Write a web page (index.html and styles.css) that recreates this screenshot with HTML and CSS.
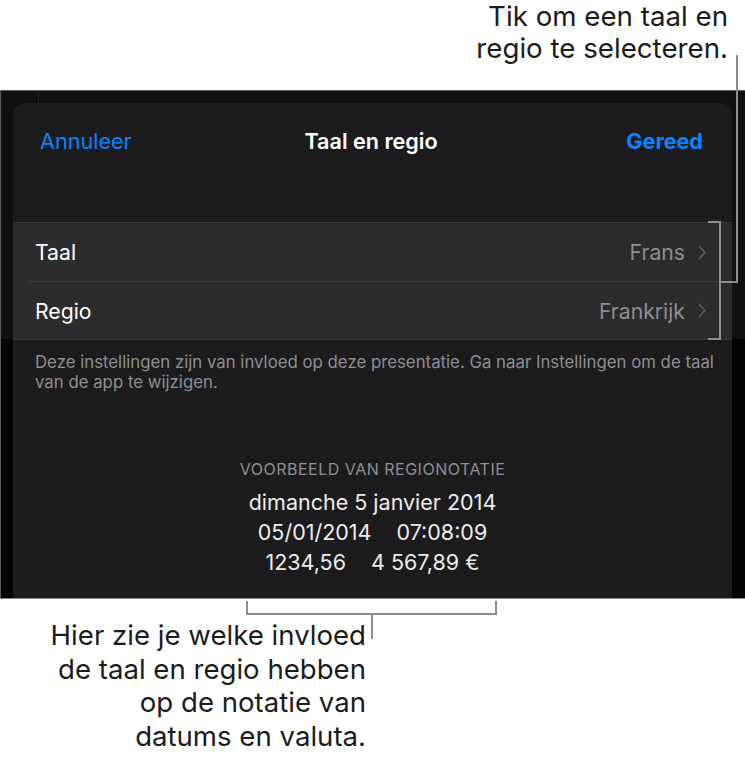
FILE: index.html
```html
<!DOCTYPE html>
<html lang="nl">
<head>
<meta charset="utf-8">
<title>Taal en regio</title>
<link rel="stylesheet" href="styles.css">
</head>
<body>
<div class="page">
  <div class="callout-top">
    <p>Tik om een taal en<br>regio te selecteren.</p>
  </div>
  <div class="frame">
    <div class="frame-mark"></div>
    <div class="sheet">
      <div class="nav">
        <span class="nav-btn">Annuleer</span>
        <span class="nav-title">Taal en regio</span>
        <span class="nav-btn nav-done">Gereed</span>
      </div>
      <div class="group">
        <div class="row">
          <span class="row-label">Taal</span>
          <span class="row-value">Frans</span>
          <svg class="chev" width="9" height="15" viewBox="0 0 9 15"><path d="M1.5 1.5 L7 7.5 L1.5 13.5" fill="none" stroke="#5a5a5f" stroke-width="1.8" stroke-linecap="round" stroke-linejoin="round"/></svg>
        </div>
        <div class="row row-sep">
          <span class="row-label">Regio</span>
          <span class="row-value">Frankrijk</span>
          <svg class="chev" width="9" height="15" viewBox="0 0 9 15"><path d="M1.5 1.5 L7 7.5 L1.5 13.5" fill="none" stroke="#5a5a5f" stroke-width="1.8" stroke-linecap="round" stroke-linejoin="round"/></svg>
        </div>
      </div>
      <p class="footnote">Deze instellingen zijn van invloed op deze presentatie. Ga naar Instellingen om de taal van de app te wijzigen.</p>
      <div class="sample">
        <div class="sample-head">VOORBEELD VAN REGIONOTATIE</div>
        <div class="sample-line">dimanche 5 janvier 2014</div>
        <div class="sample-line"><span>05/01/2014</span><span>07:08:09</span></div>
        <div class="sample-line"><span>1234,56</span><span>4 567,89 €</span></div>
      </div>
    </div>
  </div>
  <div class="callout-bottom">
    <p>Hier zie je welke invloed<br>de taal en regio hebben<br>op de notatie van<br>datums en valuta.</p>
  </div>

  <div class="line line-top-v"></div>
  <div class="line line-top-h"></div>
  <div class="bracket bracket-right"></div>
  <div class="bracket bracket-bottom"></div>
  <div class="line line-bottom-v"></div>
</div>
</body>
</html>
```
FILE: styles.css
```css
* { box-sizing: border-box; }
html, body {
  margin: 0;
  padding: 0;
  background: #ffffff;
}
body {
  font-family: Inter, Roboto, "Liberation Sans", sans-serif;
  color: #1b1b1b;
}
.page {
  position: relative;
  width: 745px;
  height: 761px;
  overflow: hidden;
}
p { margin: 0; }

.callout-top {
  height: 90px;
  display: flex;
  justify-content: flex-end;
  padding: 0 17px 0 0;
}
.callout-top p {
  font-size: 27.7px;
  line-height: 32px;
  text-align: right;
}

.frame {
  position: relative;
  height: 509px;
  border-top: 1px solid #5e5e5e;
  border-left: 1px solid #5e5e5e;
  border-bottom: 1px solid #8a8a8a;
  padding: 12px 13px 0 12px;
  display: flex;
  background: linear-gradient(to bottom, #0e110d 0, #0e110d 248px, #020302 248px);
}
.frame-mark {
  position: absolute;
  left: 37px;
  top: 0;
  width: 1px;
  height: 12px;
  background: #20231f;
}
.sheet {
  flex: 1;
  background: #1c1c1e;
  border-radius: 12px 12px 0 0;
  display: flex;
  flex-direction: column;
}

.nav {
  height: 76px;
  display: grid;
  grid-template-columns: 1fr auto 1fr;
  align-items: center;
  padding: 0 29px 0 27px;
  font-size: 21.6px;
}
.nav-btn { color: #0a84ff; }
.nav-done {
  font-weight: 700;
  justify-self: end;
}
.nav-title {
  color: #ffffff;
  font-weight: 600;
  margin-right: 1px;
}

.group {
  margin-top: 43px;
  background: #2c2c2e;
  border-top: 1px solid #38383b;
  border-bottom: 1px solid #38383b;
}
.row {
  height: 58px;
  display: flex;
  align-items: center;
  padding: 0 25px 0 22px;
  font-size: 21.2px;
}
.row-sep {
  border-top: 1px solid #3a3a3d;
  margin-left: 16px;
  padding-left: 6px;
}
.row-label {
  color: #ffffff;
  flex: 1;
}
.row-value {
  color: #8e8e93;
  margin-right: 13px;
}
.chev { display: block; }

.footnote {
  margin: 12px 14px 0 22px;
  font-size: 16.8px;
  line-height: 20px;
  color: #8e8e93;
}

.sample {
  margin-top: 67px;
  display: flex;
  flex-direction: column;
  align-items: center;
}
.sample-head {
  font-size: 16px;
  line-height: 20px;
  color: #8e8e93;
  letter-spacing: 0.5px;
  margin-bottom: 8px;
}
.sample-line {
  font-size: 21.5px;
  line-height: 30px;
  color: #ececec;
  display: flex;
  gap: 25px;
}

.callout-bottom {
  padding: 20px 0 0 0;
  width: 366px;
}
.callout-bottom p {
  font-size: 27.6px;
  line-height: 33.5px;
  text-align: right;
}

.line, .bracket {
  position: absolute;
  border-color: #8c8c8c;
  border-style: solid;
  border-width: 0;
}
.line-top-v {
  left: 736px;
  top: 55px;
  width: 2px;
  height: 228px;
  background: #8c8c8c;
}
.line-top-h {
  left: 719px;
  top: 281px;
  width: 19px;
  height: 2px;
  background: #8c8c8c;
}
.bracket-right {
  left: 708px;
  top: 221px;
  width: 13px;
  height: 119px;
  border-width: 2px 2px 2px 0;
}
.bracket-bottom {
  left: 246px;
  top: 601px;
  width: 251px;
  height: 14px;
  border-width: 0 2px 2px 2px;
}
.line-bottom-v {
  left: 371px;
  top: 614px;
  width: 2px;
  height: 25px;
  background: #8c8c8c;
}
```
